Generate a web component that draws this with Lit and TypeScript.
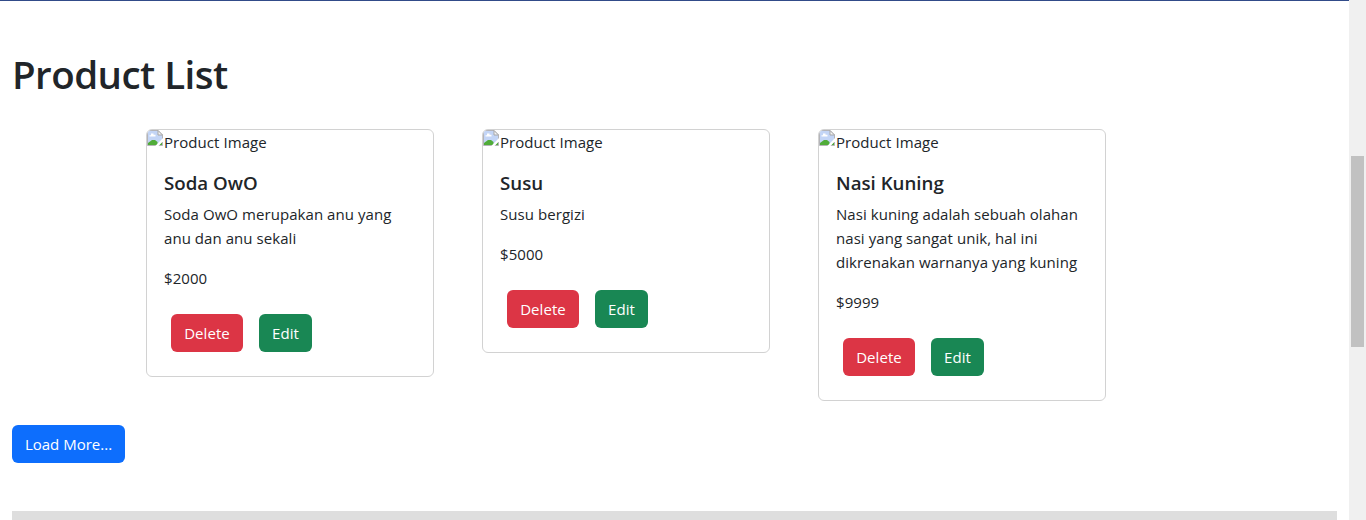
import { LitElement, html, css } from "lit";
import { customElement, property } from "lit/decorators.js";

interface Product {
  name: string;
  lines: string[];
  price: string;
}

const products: Product[] = [
  { name: "Soda OwO", lines: ["Soda OwO merupakan anu yang", "anu dan anu sekali"], price: "$2000" },
  { name: "Susu", lines: ["Susu bergizi"], price: "$5000" },
  {
    name: "Nasi Kuning",
    lines: ["Nasi kuning adalah sebuah olahan", "nasi yang sangat unik, hal ini", "dikrenakan warnanya yang kuning"],
    price: "$9999",
  },
];

@customElement("product-card")
export class ProductCard extends LitElement {
  @property({ attribute: false }) product!: Product;

  static styles = css`
    :host {
      display: block;
      box-sizing: border-box;
      width: 288px;
      border: 1px solid #d2d2d2;
      border-radius: 6px;
      overflow: hidden;
      background: #fff;
    }
    .media {
      display: flex;
      height: 24px;
      line-height: 25px;
    }
    .icon {
      width: 16px;
      height: 16px;
      flex: none;
    }
    .alt {
      padding-left: 1px;
    }
    .body {
      padding: 16px 16px 16px 17px;
    }
    .name {
      margin: 0 0 8px;
      font-size: 18.7px;
      font-weight: 600;
      line-height: 26px;
      height: 24px;
      letter-spacing: 0;
    }
    .text {
      margin: 0 0 16px;
      line-height: 24px;
      white-space: nowrap;
    }
    .line {
      display: block;
    }
    .actions {
      display: flex;
      gap: 16px;
      padding: 8px 7px;
    }
    .btn {
      height: 38px;
      padding: 0;
      border: 0;
      border-radius: 6px;
      color: #fff;
      font: inherit;
      letter-spacing: inherit;
      line-height: 38px;
    }
    .delete {
      width: 72px;
      background: #dc3545;
    }
    .edit {
      width: 53px;
      background: #198754;
    }
  `;

  render() {
    const p = this.product;
    return html`
      <div class="media">
        <svg class="icon" viewBox="0 0 16 16">
          <path d="M0.5 0.5H11L15.5 5V15.5H0.5Z" fill="#c3d5f6" stroke="#b4b4b8" />
          <path d="M11 0.5V5H15.5Z" fill="#f4f4f4" stroke="#a8a8a8" />
          <path d="M2.5 6.5V5.2H4V3.5H6.5V4.8H8.5V6.5Z" fill="#fff" />
          <path d="M1 15V13L5 10H8L10.5 12V15Z" fill="#50ac39" />
          <path d="M12 15L15 12V15Z" fill="#50ac39" />
          <path d="M8.3 16L16 8V11.2L11.5 16Z" fill="#fff" />
        </svg>
        <span class="alt">Product Image</span>
      </div>
      <div class="body">
        <h5 class="name">${p.name}</h5>
        <p class="text">${p.lines.map((l) => html`<span class="line">${l}</span>`)}</p>
        <p class="text">${p.price}</p>
        <div class="actions">
          <button class="btn delete">Delete</button>
          <button class="btn edit">Edit</button>
        </div>
      </div>
    `;
  }
}

@customElement("app-root")
export class AppRoot extends LitElement {
  static styles = css`
    :host {
      display: flex;
      height: 520px;
      overflow: hidden;
      background: #fff;
      color: #212529;
      font-family: "Open Sans", "Noto Sans", sans-serif;
      font-size: 15px;
      letter-spacing: 0.06px;
    }
    .page {
      box-sizing: border-box;
      flex: 1;
      border-top: 1px solid #314b89;
      padding: 0 12px;
    }
    .title {
      margin: 0;
      padding-top: 49px;
      height: 79px;
      font-size: 38.5px;
      font-weight: 600;
      line-height: 49px;
      letter-spacing: -0.55px;
    }
    .row {
      display: flex;
      align-items: flex-start;
      gap: 48px;
      padding-left: 134px;
    }
    .more {
      display: block;
      width: 113px;
      height: 38px;
      margin: 24px 0 48px;
      padding: 0;
      border: 0;
      border-radius: 6px;
      background: #0d6efd;
      color: #fff;
      font: inherit;
      letter-spacing: 0;
      line-height: 38px;
    }
    .divider {
      height: 9px;
      background: #dedede;
    }
    .track {
      box-sizing: border-box;
      width: 17px;
      padding: 156px 2px 0;
      background: #f0f0f0;
    }
    .thumb {
      width: 13px;
      height: 191px;
      background: #c1c1c1;
    }
  `;

  render() {
    return html`
      <main class="page">
        <h1 class="title">Product List</h1>
        <div class="row">${products.map((p) => html`<product-card .product=${p}></product-card>`)}</div>
        <button class="more">Load More...</button>
        <div class="divider"></div>
      </main>
      <div class="track"><div class="thumb"></div></div>
    `;
  }
}
